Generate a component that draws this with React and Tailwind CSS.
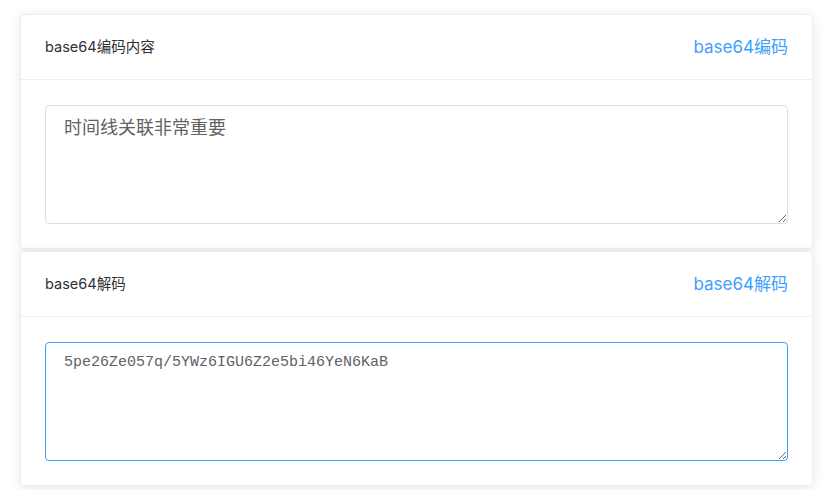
import { useState } from 'react';

const Card = ({ title, action, value, focused, mono }) => (
    <div className="bg-white border border-[#ebeef5] rounded-[4px] shadow-[0_2px_12px_0_rgba(0,0,0,0.1)]">
        {/* Header */}
        <div className="flex items-center justify-between h-[65px] px-[24px] border-b border-[#ebeef5]">
            <span className="text-[14.5px] text-[#303133]">{title}</span>
            <button className="text-[17px] text-[#409eff] leading-none">{action}</button>
        </div>
        {/* Body */}
        <div className="px-[24px] pt-[25px] pb-[24px]">
            <textarea
                defaultValue={value}
                rows={4}
                className={`block w-full h-[119px] px-[18px] py-[8px] rounded-[4px] border text-[#606266] outline-none ${
                    focused ? 'border-[#409eff]' : 'border-[#dcdfe6]'
                } ${
                    mono
                        ? "text-[15px] leading-[24px] font-['Liberation_Mono','Noto_Sans_CJK_SC',monospace]"
                        : "text-[18px] leading-[24px] font-['Noto_Sans_CJK_SC',sans-serif]"
                }`}
            />
        </div>
    </div>
);

export default function App() {
    const [source] = useState('时间线关联非常重要');
    const [encoded] = useState('5pe26Ze057q/5YWz6IGU6Z2e5bi46YeN6KaB');

    return (
        <div className="min-h-screen bg-white pl-[20px] pr-[10px] pt-[14px] pb-[3px] flex flex-col gap-[2px] font-['Inter','Noto_Sans_CJK_SC',sans-serif]">
            <Card title="base64编码内容" action="base64编码" value={source} />
            <Card title="base64解码" action="base64解码" value={encoded} focused mono />
        </div>
    );
}
